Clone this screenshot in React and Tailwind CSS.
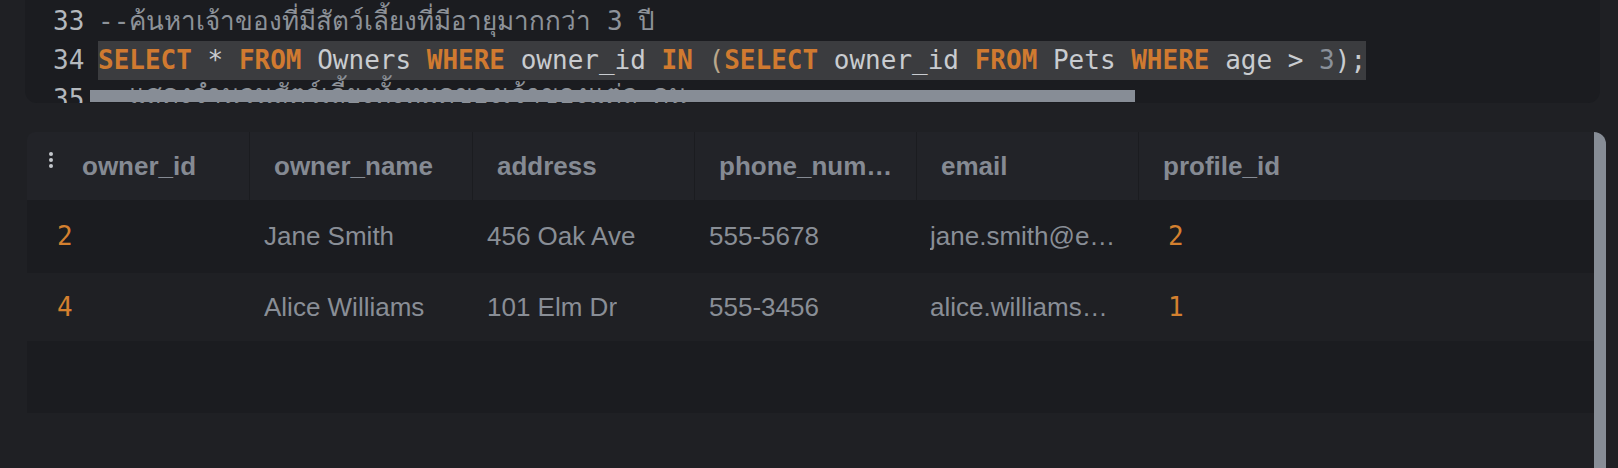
const mono = "font-['DejaVu_Sans_Mono','Liberation_Mono','Noto_Sans',monospace]";
const sans = "font-['Liberation_Sans',Arial,sans-serif]";

const columns = ['owner_id', 'owner_name', 'address', 'phone_number', 'email', 'profile_id'];

const rows = [
    { owner_id: 2, owner_name: 'Jane Smith', address: '456 Oak Ave', phone_number: '555-5678', email: 'jane.smith@example.com', profile_id: 2 },
    { owner_id: 4, owner_name: 'Alice Williams', address: '101 Elm Dr', phone_number: '555-3456', email: 'alice.williams@example.com', profile_id: 1 },
];

function Kw({ children }) {
    return <span className="font-bold text-[#d07a30]">{children}</span>;
}

function CodeLine({ num, children }) {
    return (
        <div className="flex h-[39px] items-center whitespace-pre leading-[39px]">
            <span className="w-[45px] shrink-0 text-[#b4b8bd]">{num}</span>
            {children}
        </div>
    );
}

function Editor() {
    return (
        <div className={`relative mr-[18px] ml-[25px] h-[103px] overflow-hidden rounded-b-[12px] bg-[#1b1c20] pt-[2px] pl-[28px] text-[26px] ${mono}`}>
            <CodeLine num="33">
                <span className="text-[#8d9299]">--ค้นหาเจ้าของที่มีสัตว์เลี้ยงที่มีอายุมากกว่า 3 ปี</span>
            </CodeLine>
            <CodeLine num="34">
                <span className="bg-[#3b3c3f] text-[#c9ccd0]">
                    <Kw>SELECT</Kw> * <Kw>FROM</Kw> Owners <Kw>WHERE</Kw> owner_id <Kw>IN</Kw>{' '}
                    <span className="text-[#b9a78b]">(</span>
                    <Kw>SELECT</Kw> owner_id <Kw>FROM</Kw> Pets <Kw>WHERE</Kw> age &gt;{' '}
                    <span className="text-[#8a9099]">3</span>);
                </span>
            </CodeLine>
            <CodeLine num="35">
                <span className="-mt-[11px] text-[#8d9299]">--แสดงจำนวนสัตว์เลี้ยงทั้งหมดของเจ้าของแต่ละคน</span>
            </CodeLine>
            {/* horizontal scrollbar thumb */}
            <div className="absolute top-[90px] left-[65px] h-[12px] w-[1045px] bg-[#878d96]" />
        </div>
    );
}

function KebabIcon() {
    return (
        <svg width="4" height="16" viewBox="0 0 4 16" className="mt-[20px] ml-[22px] shrink-0 self-start">
            <circle cx="2" cy="2" r="2" fill="#c3c7cc" />
            <circle cx="2" cy="8" r="2" fill="#c3c7cc" />
            <circle cx="2" cy="14" r="2" fill="#c3c7cc" />
        </svg>
    );
}

const grid = 'grid grid-cols-[222px_223px_222px_222px_222px_1fr]';

function ResultTable() {
    return (
        <div className="mt-[29px] mr-[12px] ml-[27px] flex h-[336px]">
            <div className="flex min-w-0 flex-1 flex-col">
                <div className={`overflow-hidden rounded-tl-[8px] text-[26px] ${sans}`}>
                    {/* Header */}
                    <div className={`${grid} h-[68px] bg-[#222328] font-bold text-[#858a93]`}>
                        {columns.map((col, i) => (
                            <div
                                key={col}
                                className={`flex min-w-0 items-center ${i === 0 ? '' : 'border-l border-[#1b1c20] pl-[24px] pr-[22px]'}`}
                            >
                                {i === 0 && <KebabIcon />}
                                <span className={`truncate ${i === 0 ? 'ml-[29px]' : ''}`}>{col}</span>
                            </div>
                        ))}
                    </div>

                    {/* Rows */}
                    {rows.map((row, r) => (
                        <div
                            key={row.owner_id}
                            className={`${grid} ${r === 0 ? 'h-[73px] bg-[#1b1c20]' : 'h-[68px] bg-[#1f2024]'} text-[#898e96]`}
                        >
                            {columns.map((col) => {
                                const value = row[col];
                                const isNum = typeof value === 'number';
                                return (
                                    <div
                                        key={col}
                                        className={`flex min-w-0 items-center ${isNum ? `pl-[30px] text-[#d4802f] ${mono}` : col === 'email' ? 'pl-[14px] pr-[18px]' : 'pl-[15px] pr-[15px]'}`}
                                    >
                                        <span className="truncate">{value}</span>
                                    </div>
                                );
                            })}
                        </div>
                    ))}

                    {/* empty space in grid */}
                    <div className="h-[72px] bg-[#1b1c20]" />
                </div>
            </div>
            {/* vertical scrollbar */}
            <div className="w-[12px] shrink-0 rounded-tr-[12px] bg-[#878d96]" />
        </div>
    );
}

export default function App() {
    return (
        <div className="h-[468px] w-full overflow-hidden bg-[#1f2024]">
            <Editor />
            <ResultTable />
        </div>
    );
}
